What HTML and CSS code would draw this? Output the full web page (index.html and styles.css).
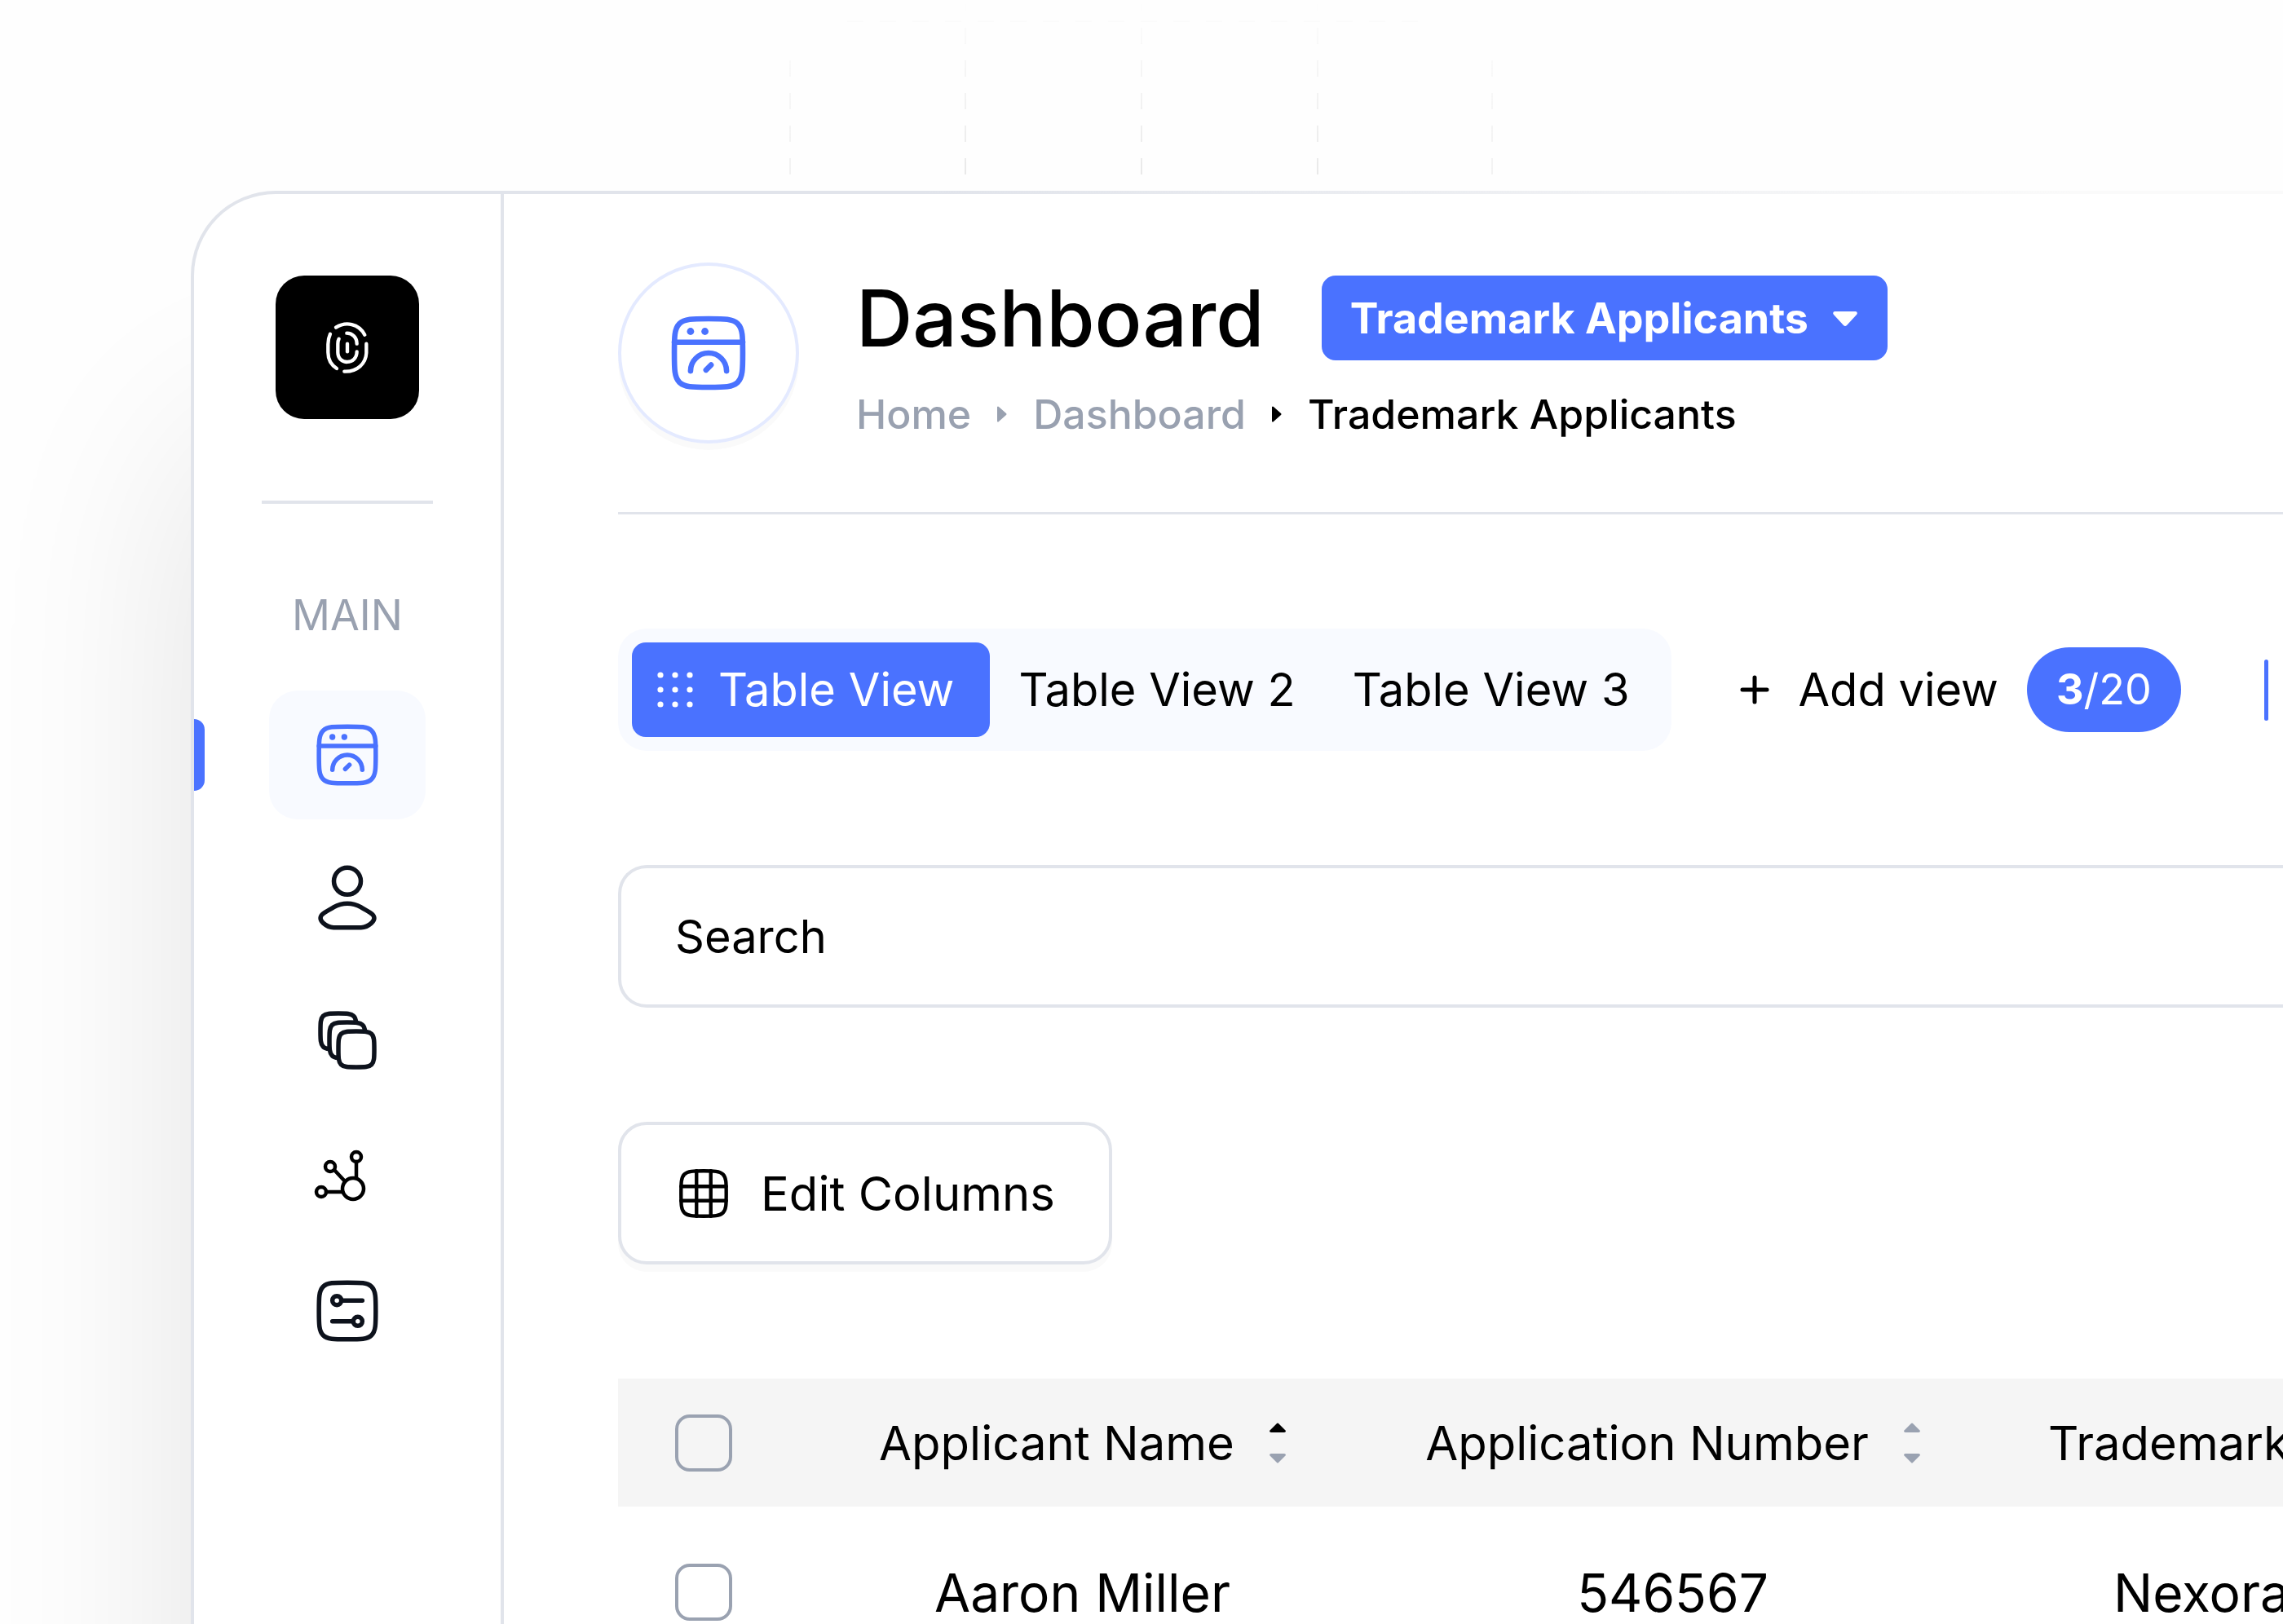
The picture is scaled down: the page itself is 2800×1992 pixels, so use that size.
FILE: index.html
```html
<!DOCTYPE html>
<html lang="en">

<head>
    <meta charset="UTF-8">
    <title>Dashboard</title>
    <link rel="stylesheet" href="styles.css">
</head>

<body>
    <!-- dashed grid above the window -->
    <div class="backdrop">
        <svg class="grid-lines" width="1300" height="214" viewBox="0 0 1300 214" fill="none" stroke="#e9e9e9" stroke-width="2" stroke-dasharray="20 20">
            <path d="M220 214V70" opacity=".6" />
            <path d="M435 214V0" />
            <path d="M651 214V0" />
            <path d="M867 214V0" />
            <path d="M1081 214V70" opacity=".6" />
            <path d="M290 26H1010" opacity=".8" />
        </svg>
    </div>

    <div class="frame">
        <div class="window">
            <aside class="sidebar">
                <a class="logo" href="#" aria-label="Home page">
                    <svg width="58" height="68" viewBox="531 514 174 204" fill="none" stroke="#fff" stroke-width="13" stroke-linecap="round">
                        <path d="M576 543C612 520 660 528 682 570" />
                        <path d="M555 567C549 580 547 590 547 605V635C547 660 560 682 579 694" />
                        <path d="M688 603V637C686 675 655 707 607 705" />
                        <path d="M616 564C637 564 653 580 653 603" />
                        <path d="M587 585C583 592 583 598 583 604V635C583 682 653 682 653 632" />
                        <path d="M618 603V632" />
                    </svg>
                </a>
                <div class="sidebar-line"></div>
                <div class="sidebar-title">MAIN</div>
                <nav class="menu">
                    <a class="menu-item active" href="#" aria-label="Dashboard">
                        <svg class="icon" viewBox="0 0 24 24">
                            <path d="M2.5 12C2.5 7.522 2.5 5.282 3.891 3.891C5.282 2.5 7.522 2.5 12 2.5C16.478 2.5 18.718 2.5 20.109 3.891C21.5 5.282 21.5 7.522 21.5 12C21.5 16.478 21.5 18.718 20.109 20.109C18.718 21.5 16.478 21.5 12 21.5C7.522 21.5 5.282 21.5 3.891 20.109C2.5 18.718 2.5 16.478 2.5 12Z" />
                            <path d="M2.5 9H21.5" />
                            <circle class="dot" cx="7" cy="6" r="1" />
                            <circle class="dot" cx="11" cy="6" r="1" />
                            <path d="M17 17C17 14.239 14.761 12 12 12C9.239 12 7 14.239 7 17" />
                            <path d="M12.707 15.293L11.293 16.707" />
                        </svg>
                    </a>
                    <a class="menu-item" href="#" aria-label="Users">
                        <svg class="icon" viewBox="0 0 24 24">
                            <circle cx="12" cy="6.5" r="4.5" />
                            <path d="M16.6 22H7.4C6 22 4.9 21.4 3.9 20.5C2.7 19.3 2.7 18.3 4 17.3C5.1 16.5 6.3 15.9 7.5 15.2C10.3 13.6 13.7 13.6 16.5 15.2C17.7 15.9 18.9 16.5 20 17.3C21.3 18.3 21.3 19.3 20.1 20.5C19.1 21.4 18 22 16.6 22Z" />
                        </svg>
                    </a>
                    <a class="menu-item" href="#" aria-label="Collections">
                        <svg class="icon" viewBox="0 0 24 24">
                            <path d="M9 15C9 12.2 9 10.8 9.9 9.9C10.8 9 12.2 9 15 9C17.8 9 19.2 9 20.1 9.9C21 10.8 21 12.2 21 15C21 17.8 21 19.2 20.1 20.1C19.2 21 17.8 21 15 21C12.2 21 10.8 21 9.9 20.1C9 19.2 9 17.8 9 15Z" />
                            <path d="M17.9 9C17.8 8 17.6 7.3 17.1 6.9C16.2 6 14.8 6 12 6C9.2 6 7.8 6 6.9 6.9C6 7.8 6 9.2 6 12C6 14.8 6 16.2 6.9 17.1C7.3 17.6 8 17.8 9 17.9" />
                            <path d="M14.9 6C14.8 5 14.6 4.3 14.1 3.9C13.2 3 11.8 3 9 3C6.2 3 4.8 3 3.9 3.9C3 4.8 3 6.2 3 9C3 11.8 3 13.2 3.9 14.1C4.3 14.6 5 14.8 6 14.9" />
                        </svg>
                    </a>
                    <a class="menu-item" href="#" aria-label="Connections">
                        <svg class="icon-small" viewBox="0 0 70 70">
                            <circle cx="51" cy="51" r="13" />
                            <circle cx="12" cy="55" r="6" />
                            <circle cx="23" cy="24" r="6" />
                            <circle cx="55" cy="12" r="6" />
                            <path d="M18 55H38M28 28L41 42M55 18V38" />
                        </svg>
                    </a>
                    <a class="menu-item" href="#" aria-label="Settings">
                        <svg class="icon" viewBox="0 0 24 24">
                            <path d="M2.5 12C2.5 7.522 2.5 5.282 3.891 3.891C5.282 2.5 7.522 2.5 12 2.5C16.478 2.5 18.718 2.5 20.109 3.891C21.5 5.282 21.5 7.522 21.5 12C21.5 16.478 21.5 18.718 20.109 20.109C18.718 21.5 16.478 21.5 12 21.5C7.522 21.5 5.282 21.5 3.891 20.109C2.5 18.718 2.5 16.478 2.5 12Z" />
                            <circle cx="8.5" cy="8.5" r="1.5" />
                            <circle cx="15.5" cy="15.5" r="1.5" />
                            <path d="M10 8.5H17M14 15.5H7" />
                        </svg>
                    </a>
                </nav>
            </aside>

            <main class="content">
                <header class="header">
                    <div class="header-icon">
                        <svg class="icon" viewBox="0 0 24 24">
                            <path d="M2.5 12C2.5 7.522 2.5 5.282 3.891 3.891C5.282 2.5 7.522 2.5 12 2.5C16.478 2.5 18.718 2.5 20.109 3.891C21.5 5.282 21.5 7.522 21.5 12C21.5 16.478 21.5 18.718 20.109 20.109C18.718 21.5 16.478 21.5 12 21.5C7.522 21.5 5.282 21.5 3.891 20.109C2.5 18.718 2.5 16.478 2.5 12Z" />
                            <path d="M2.5 9H21.5" />
                            <circle class="dot" cx="7" cy="6" r="1" />
                            <circle class="dot" cx="11" cy="6" r="1" />
                            <path d="M17 17C17 14.239 14.761 12 12 12C9.239 12 7 14.239 7 17" />
                            <path d="M12.707 15.293L11.293 16.707" />
                        </svg>
                    </div>
                    <div class="header-text">
                        <div class="title-row">
                            <h1>Dashboard</h1>
                            <div class="picker">
                                <select aria-label="Dashboard type">
                                    <option>Trademark Applicants</option>
                                </select>
                                <svg class="picker-arrow" width="30" height="18" viewBox="0 0 30 18">
                                    <path d="M2 0H28Q31 1 29 4L17 17Q15 19 13 17L1 4Q-1 1 2 0Z" fill="#fff" />
                                </svg>
                            </div>
                        </div>
                        <nav class="breadcrumb" aria-label="Breadcrumb">
                            <a href="#">Home</a>
                            <svg width="12" height="20" viewBox="0 0 12 20"><path d="M0 1Q1 0 2 1L11 9Q12 10 11 11L2 19Q1 20 0 19Z" /></svg>
                            <a href="#">Dashboard</a>
                            <svg class="dark" width="12" height="20" viewBox="0 0 12 20"><path d="M0 1Q1 0 2 1L11 9Q12 10 11 11L2 19Q1 20 0 19Z" /></svg>
                            <a class="dark" href="#" aria-current="page">Trademark Applicants</a>
                        </nav>
                    </div>
                </header>

                <div class="views">
                    <div class="tabs">
                        <button class="tab active" type="button">
                            <svg width="44" height="44" viewBox="0 0 44 44" fill="#fff">
                                <circle cx="4" cy="4" r="3.6" /><circle cx="22" cy="4" r="3.6" /><circle cx="40" cy="4" r="3.6" />
                                <circle cx="4" cy="22" r="3.6" /><circle cx="22" cy="22" r="3.6" /><circle cx="40" cy="22" r="3.6" />
                                <circle cx="4" cy="40" r="3.6" /><circle cx="22" cy="40" r="3.6" /><circle cx="40" cy="40" r="3.6" />
                            </svg>
                            Table View
                        </button>
                        <button class="tab" type="button">Table View 2</button>
                        <button class="tab" type="button">Table View 3</button>
                    </div>
                    <button class="add-view" type="button">
                        <svg width="36" height="36" viewBox="0 0 36 36" fill="none" stroke="#000" stroke-width="5" stroke-linecap="round">
                            <path d="M18 3V33M3 18H33" />
                        </svg>
                        Add view
                        <span class="badge"><b>3</b>/20</span>
                    </button>
                    <div class="views-line"></div>
                </div>

                <input class="search" type="text" placeholder="Search" aria-label="Search">

                <button class="edit-btn" type="button">
                    <svg class="icon-small" viewBox="0 0 24 24">
                        <path d="M2.5 12C2.5 7.522 2.5 5.282 3.891 3.891C5.282 2.5 7.522 2.5 12 2.5C16.478 2.5 18.718 2.5 20.109 3.891C21.5 5.282 21.5 7.522 21.5 12C21.5 16.478 21.5 18.718 20.109 20.109C18.718 21.5 16.478 21.5 12 21.5C7.522 21.5 5.282 21.5 3.891 20.109C2.5 18.718 2.5 16.478 2.5 12Z" />
                        <path d="M2.5 9H21.5M2.5 15H21.5M9 2.5V21.5M15 2.5V21.5" />
                    </svg>
                    Edit Columns
                </button>

                <table class="table">
                    <colgroup>
                        <col class="col-check">
                        <col class="col-name">
                        <col class="col-number">
                        <col>
                    </colgroup>
                    <thead>
                        <tr>
                            <th class="check"><input type="checkbox" aria-label="Select all rows"></th>
                            <th>
                                <button class="sort" type="button">
                                    Applicant Name
                                    <svg width="20" height="50" viewBox="0 0 20 50">
                                        <path d="M9 1Q10 0 11 1L20 10Q20 12 18 12H2Q0 12 0 10Z" fill="#000" />
                                        <path d="M9 49Q10 50 11 49L20 40Q20 38 18 38H2Q0 38 0 40Z" fill="#9aa2b1" />
                                    </svg>
                                </button>
                            </th>
                            <th>
                                <button class="sort" type="button">
                                    Application Number
                                    <svg width="20" height="50" viewBox="0 0 20 50" fill="#9aa2b1">
                                        <path d="M9 1Q10 0 11 1L20 10Q20 12 18 12H2Q0 12 0 10Z" />
                                        <path d="M9 49Q10 50 11 49L20 40Q20 38 18 38H2Q0 38 0 40Z" />
                                    </svg>
                                </button>
                            </th>
                            <th class="last">Trademark</th>
                        </tr>
                    </thead>
                    <tbody>
                        <tr>
                            <td class="check"><input type="checkbox" aria-label="Select Aaron Miller"></td>
                            <td>Aaron Miller</td>
                            <td>546567</td>
                            <td class="last">Nexora</td>
                        </tr>
                    </tbody>
                </table>
            </main>
        </div>
    </div>
</body>

</html>
```
FILE: styles.css
```css
* {
    box-sizing: border-box;
}

body {
    margin: 0;
    height: 100vh;
    overflow: hidden;
    background: #fefefe;
    color: #000;
    font-family: "Inter", sans-serif;
    font-size: 58px;
}

button,
input,
select {
    font: inherit;
    color: inherit;
}

button {
    display: flex;
    align-items: center;
    padding: 0;
    border: 0;
    background: none;
    white-space: nowrap;
    cursor: pointer;
}

a {
    color: inherit;
    text-decoration: none;
}

svg {
    display: block;
    flex: none;
}

/* Backdrop */
.backdrop {
    height: 234px;
    padding-left: 749px;
}

.grid-lines {
    -webkit-mask-image: linear-gradient(transparent, #000);
    mask-image: linear-gradient(transparent, #000);
}

/* Window: the frame is the border, it fades out to the right */
.frame {
    min-height: 100vh;
    margin-left: 234px;
    padding: 4px 0 0 4px;
    border-radius: 104px 0 0 0;
    background: linear-gradient(to right, #e1e4eb 35%, #fafafa 90%);
    box-shadow: 0 300px 560px rgba(0, 0, 0, 0.11);
}

.window {
    display: flex;
    min-height: 100vh;
    border-radius: 100px 0 0 0;
    background: #fff;
}

/* Icons */
.icon,
.icon-small {
    width: 88px;
    height: 88px;
    fill: none;
    stroke: currentColor;
    stroke-width: 1.5;
    stroke-linecap: round;
    stroke-linejoin: round;
}

.icon .dot {
    fill: currentColor;
    stroke-width: 0;
}

.icon-small {
    width: 70px;
    height: 70px;
}

/* Sidebar */
.sidebar {
    display: flex;
    flex: none;
    flex-direction: column;
    align-items: center;
    width: 380px;
    padding-top: 100px;
    border-right: 4px solid #e1e4eb;
}

.logo {
    display: flex;
    align-items: center;
    justify-content: center;
    width: 176px;
    height: 176px;
    border-radius: 35px;
    background: #000;
}

.sidebar-line {
    width: 210px;
    height: 4px;
    margin-top: 100px;
    background: #e1e4eb;
}

.sidebar-title {
    margin-top: 107px;
    color: #99a1b0;
    font-size: 52px;
    line-height: 60px;
}

.menu {
    display: flex;
    flex-direction: column;
    gap: 17px;
    width: 192px;
    margin-top: 62px;
}

.menu-item {
    display: flex;
    padding: 35px 52px;
    border-radius: 35px;
    color: #0d121c;
}

.menu-item .icon-small {
    color: #000;
    stroke-width: 4.5;
}

.menu-item.active {
    position: relative;
    background: #f8faff;
    color: #4a72ff;
}

/* marker on the window edge */
.menu-item.active::before {
    content: "";
    position: absolute;
    top: 35px;
    left: -92px;
    width: 13px;
    height: 88px;
    border-radius: 0 14px 14px 0;
    background: #4a72ff;
}

/* Content */
.content {
    flex: 1;
    min-width: 0;
    padding: 84px 0 0 140px;
}

.header {
    display: flex;
    align-items: center;
    gap: 70px;
    padding-bottom: 84px;
    border-bottom: 3px solid #e1e4eb;
}

.header-icon {
    display: flex;
    align-items: center;
    justify-content: center;
    width: 222px;
    height: 222px;
    border: 4px solid #e4eaff;
    border-radius: 50%;
    box-shadow: 0 8px 0 #fafafa;
    color: #4a72ff;
}

.header-icon .icon {
    width: 106px;
    height: 106px;
}

.header-text {
    padding-top: 6px;
}

.title-row {
    display: flex;
    align-items: center;
    gap: 70px;
}

h1 {
    margin: 0;
    font-size: 96px;
    font-weight: 500;
    line-height: 116px;
}

.picker {
    position: relative;
}

.picker select {
    height: 104px;
    padding: 0 96px 0 35px;
    border: 0;
    border-radius: 17px;
    background: #4a72ff;
    color: #fff;
    font-size: 52px;
    font-weight: 700;
    appearance: none;
}

.picker-arrow {
    position: absolute;
    top: 44px;
    right: 37px;
    pointer-events: none;
}

.breadcrumb {
    display: flex;
    align-items: center;
    gap: 32px;
    margin-top: 28px;
    color: #99a1b0;
    font-size: 50px;
    font-weight: 500;
    line-height: 64px;
}

.breadcrumb svg {
    fill: currentColor;
}

.breadcrumb .dark {
    color: #000;
}

/* Views */
.views {
    display: flex;
    align-items: center;
    margin-top: 140px;
    font-size: 56px;
}

.tabs {
    display: flex;
    padding: 17px;
    border-radius: 35px;
    background: #f8faff;
}

.tab {
    height: 116px;
    padding: 0 35px;
    border-radius: 17px;
}

.tab.active {
    gap: 31px;
    padding: 0 44px 0 31px;
    background: #4a72ff;
    color: #fff;
}

.add-view {
    gap: 35px;
    margin-left: 84px;
}

.badge {
    height: 104px;
    padding: 0 36px;
    border-radius: 52px;
    background: #4a72ff;
    color: #fff;
    font-size: 52px;
    line-height: 104px;
}

.views-line {
    width: 5px;
    height: 75px;
    margin-left: 102px;
    border-radius: 3px;
    background: #4a72ff;
}

/* Search */
.search {
    display: block;
    width: 100%;
    height: 175px;
    margin-top: 140px;
    padding: 0 66px;
    border: 4px solid #e1e4eb;
    border-right: 0;
    border-radius: 35px 0 0 35px;
    background: #fff;
    font-size: 56px;
}

.search::placeholder {
    color: #000;
    opacity: 1;
}

.edit-btn {
    gap: 35px;
    height: 175px;
    margin-top: 140px;
    padding: 0 66px;
    border: 4px solid #e1e4eb;
    border-radius: 35px;
    background: #fff;
    box-shadow: 0 9px 0 #fafafa;
}

/* Table */
.table {
    width: 100%;
    margin-top: 140px;
    border-collapse: collapse;
    table-layout: fixed;
    white-space: nowrap;
}

.col-check {
    width: 234px;
}

.col-name {
    width: 671px;
}

.col-number {
    width: 777px;
}

.table th {
    height: 157px;
    padding: 0;
    background: #f5f5f5;
    font-weight: 400;
}

.table td {
    height: 210px;
    padding: 0;
    font-size: 64px;
    text-align: center;
}

.table .check {
    padding-left: 70px;
    text-align: left;
}

.table th.last {
    padding-left: 72px;
    text-align: left;
}

.table td.last {
    padding-left: 152px;
    text-align: left;
}

.table input {
    display: block;
    width: 70px;
    height: 70px;
    margin: 0;
    border: 4px solid #9aa2b1;
    border-radius: 18px;
    appearance: none;
}

.sort {
    gap: 43px;
    margin: 0 auto;
}
```
